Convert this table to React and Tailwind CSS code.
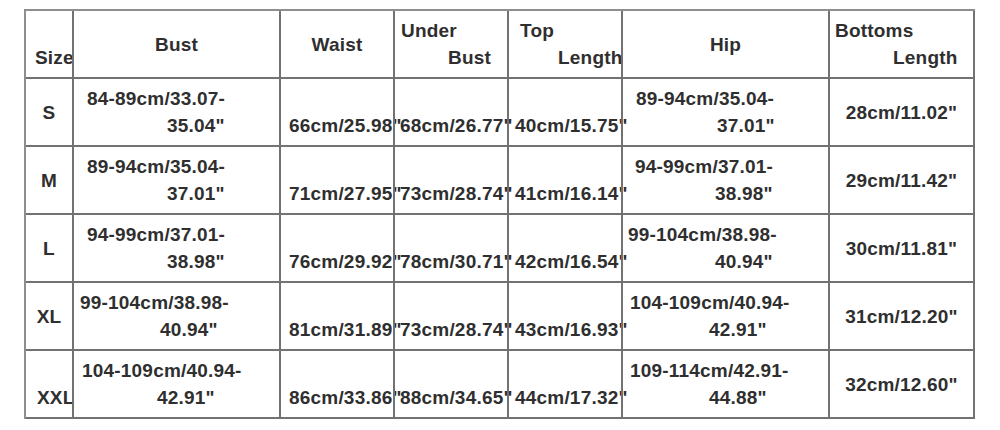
const rows = [
  {
    size: "S",
    bust: ["84-89cm/33.07-", '35.04"', "pl-[13px]", "pl-[93px]"],
    waist: '66cm/25.98"',
    under: '68cm/26.77"',
    top: '40cm/15.75"',
    hip: ["89-94cm/35.04-", '37.01"', "pl-[13px]", "pl-[94px]"],
    bottoms: '28cm/11.02"',
  },
  {
    size: "M",
    bust: ["89-94cm/35.04-", '37.01"', "pl-[13px]", "pl-[93px]"],
    waist: '71cm/27.95"',
    under: '73cm/28.74"',
    top: '41cm/16.14"',
    hip: ["94-99cm/37.01-", '38.98"', "pl-[12px]", "pl-[92px]"],
    bottoms: '29cm/11.42"',
  },
  {
    size: "L",
    bust: ["94-99cm/37.01-", '38.98"', "pl-[13px]", "pl-[93px]"],
    waist: '76cm/29.92"',
    under: '78cm/30.71"',
    top: '42cm/16.54"',
    hip: ["99-104cm/38.98-", '40.94"', "pl-[5px]", "pl-[92px]"],
    bottoms: '30cm/11.81"',
  },
  {
    size: "XL",
    bust: ["99-104cm/38.98-", '40.94"', "pl-[6px]", "pl-[86px]"],
    waist: '81cm/31.89"',
    under: '73cm/28.74"',
    top: '43cm/16.93"',
    hip: ["104-109cm/40.94-", '42.91"', "pl-[7px]", "pl-[86px]"],
    bottoms: '31cm/12.20"',
  },
  {
    size: "XXL",
    bust: ["104-109cm/40.94-", '42.91"', "pl-[8px]", "pl-[83px]"],
    waist: '86cm/33.86"',
    under: '88cm/34.65"',
    top: '44cm/17.32"',
    hip: ["109-114cm/42.91-", '44.88"', "pl-[7px]", "pl-[86px]"],
    bottoms: '32cm/12.60"',
  },
];

const cell = "flex flex-col justify-center border-r-2 border-b-2 border-[#727272]";
const line = "h-[27px] leading-[27px] whitespace-nowrap";

// text sits under the grid lines, like in the picture
function T({ children }) {
  return <span className="relative -z-10">{children}</span>;
}

function Center({ text }) {
  return (
    <div className={cell}>
      <div className={line + " text-center"}>
        <T>{text}</T>
      </div>
    </div>
  );
}

function TwoLine({ first, second, pl1, pl2 }) {
  return (
    <div className={cell}>
      <div className={line + " " + pl1}>
        <T>{first}</T>
      </div>
      <div className={line + " " + pl2}>
        <T>{second}</T>
      </div>
    </div>
  );
}

export default function App() {
  return (
    <div className="w-[1000px] h-[430px] bg-white pt-[9px] pl-[24px]">
      <div
        className="isolate bg-white w-[951px] grid grid-cols-[48px_207px_114px_114px_114px_207px_145px] auto-rows-[68px] border-t-2 border-l-2 border-[#8e8e8e] text-[19px] font-bold tracking-[0.2px] text-[#2f2f2f]"
        style={{ fontFamily: '"Liberation Sans", Arial, sans-serif' }}
      >
        {/* header */}
        <TwoLine first="" second="Size" pl1="" pl2="pl-[9px]" />
        <Center text="Bust" />
        <Center text="Waist" />
        <TwoLine first="Under" second="Bust" pl1="pl-[6px]" pl2="pl-[53px]" />
        <TwoLine first="Top" second="Length" pl1="pl-[11px]" pl2="pl-[49px]" />
        <Center text="Hip" />
        <TwoLine first="Bottoms" second="Length" pl1="pl-[5px]" pl2="pl-[63px]" />

        {rows.map((r) => (
          <div key={r.size} className="contents">
            {r.size === "XXL" ? (
              <TwoLine first="" second={r.size} pl1="" pl2="pl-[11px]" />
            ) : (
              <Center text={r.size} />
            )}
            <TwoLine first={r.bust[0]} second={r.bust[1]} pl1={r.bust[2]} pl2={r.bust[3]} />
            <TwoLine first="" second={r.waist} pl1="" pl2="pl-[8px]" />
            <TwoLine first="" second={r.under} pl1="" pl2="pl-[5px]" />
            <TwoLine first="" second={r.top} pl1="" pl2="pl-[6px]" />
            <TwoLine first={r.hip[0]} second={r.hip[1]} pl1={r.hip[2]} pl2={r.hip[3]} />
            <Center text={r.bottoms} />
          </div>
        ))}
      </div>
    </div>
  );
}
